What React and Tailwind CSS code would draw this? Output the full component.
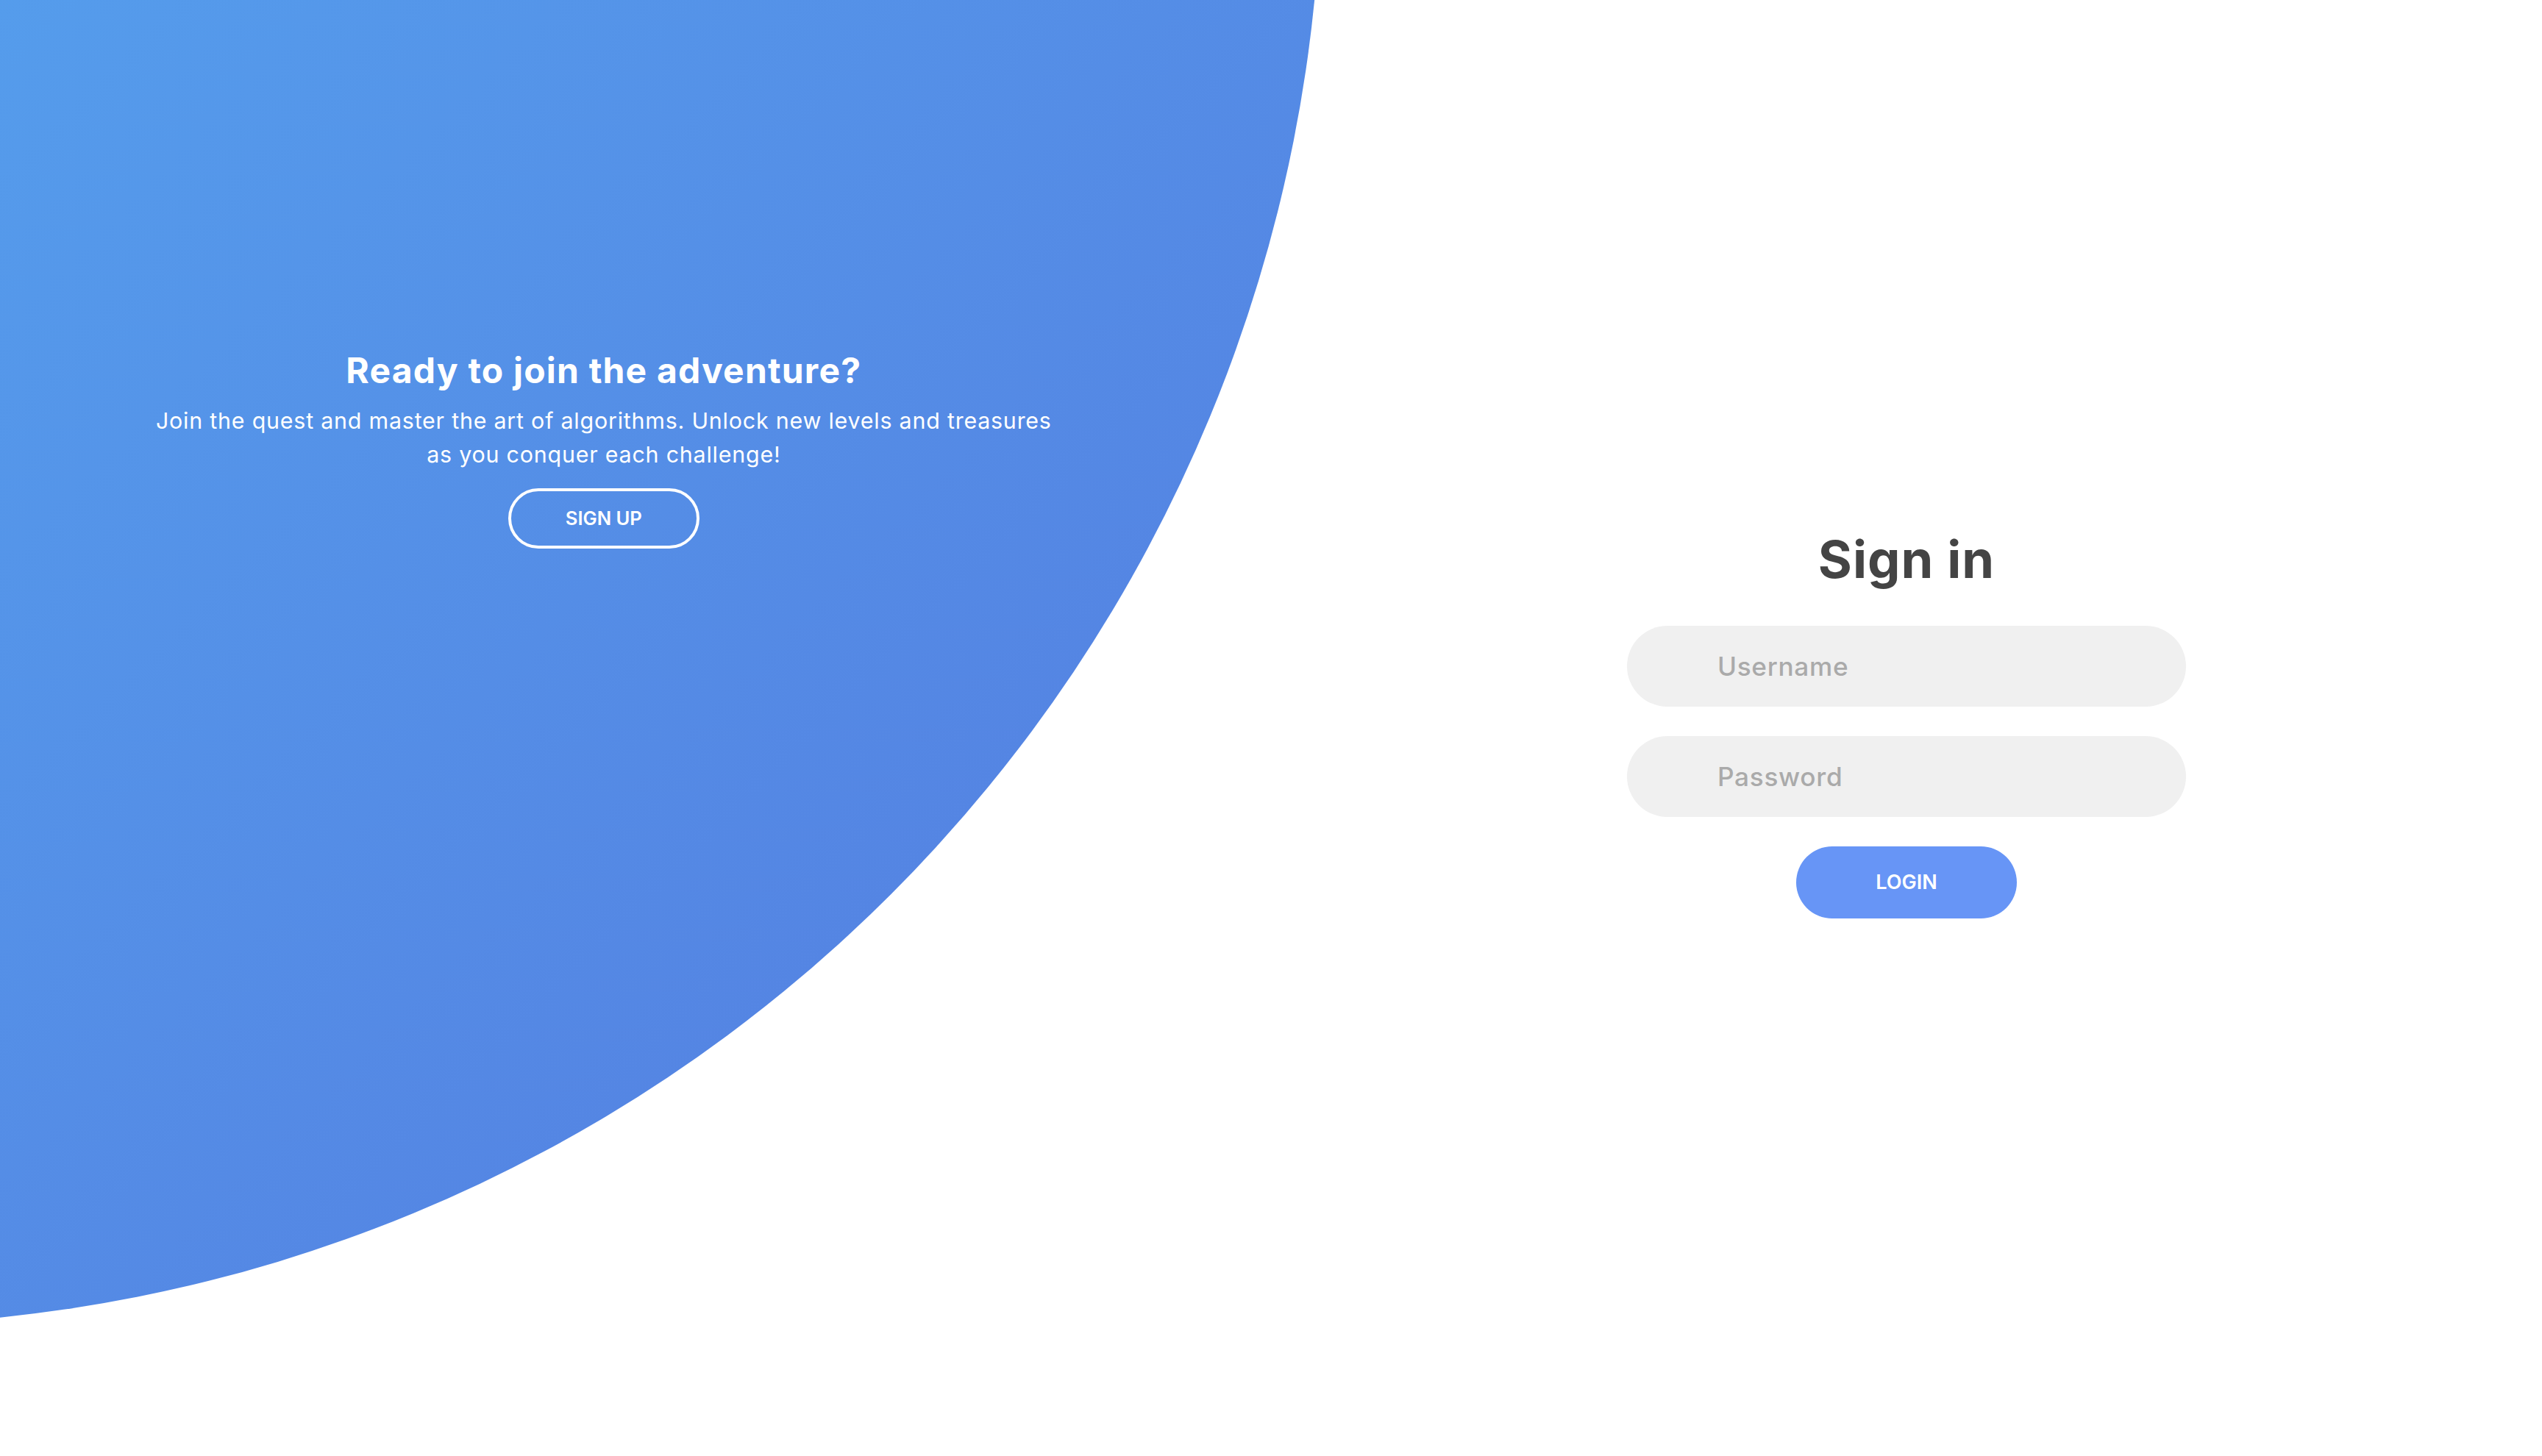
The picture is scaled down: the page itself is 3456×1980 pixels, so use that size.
import React, { useState } from "react";

const font = "font-['Inter','Noto_Sans',sans-serif]";

const Field = ({ type, placeholder, value, onChange }) => {
  return (
    <div className="w-full max-w-[760px] h-[110px] my-[20px] rounded-full bg-[#f0f0f0] grid grid-cols-[15%_85%] px-[12.8px]">
      <span />
      <input
        type={type}
        placeholder={placeholder}
        value={value}
        onChange={(e) => onChange(e.target.value)}
        className="bg-transparent outline-none border-none text-[35.2px] leading-none tracking-[0.02em] font-semibold text-[#333] placeholder:text-[#aaa] placeholder:font-medium"
      />
    </div>
  );
};

const App = () => {
  const [username, setUsername] = useState("");
  const [password, setPassword] = useState("");

  const handleSubmit = (e) => {
    e.preventDefault();
  };

  return (
    <div className={`relative w-full h-[1980px] overflow-hidden bg-white ${font}`}>
      {/* big circle behind the left panel */}
      <div className="absolute left-[-2203px] top-[-2198px] w-[4000px] h-[4000px] rounded-full bg-[linear-gradient(-45deg,#547adf_0%,#56c6fb_100%)]" />

      <div className="relative grid grid-cols-2 h-full">
        <div className="pl-[12%] pr-[17%] pt-[480px] text-center text-white">
          <h3 className="text-[48px] leading-none font-bold tracking-[0.025em]">
            Ready to join the adventure?
          </h3>
          <p className="text-[30.4px] leading-[45.6px] py-[22.4px] tracking-[0.026em]">
            Join the quest and master the art of algorithms. Unlock new levels
            and treasures
            <br />
            as you conquer each challenge!
          </p>
          <button className="w-[260px] h-[82px] rounded-full border-[4px] border-white bg-transparent text-white uppercase font-semibold text-[25.6px]">
            Sign up
          </button>
        </div>

        <div className="flex flex-col items-center justify-center">
          <form
            onSubmit={handleSubmit}
            className="w-full flex flex-col items-center justify-center px-[160px]"
          >
            <h2 className="text-[70.4px] leading-[100px] mb-[20px] font-bold tracking-[0.015em] text-[#444]">
              Sign in
            </h2>
            <Field
              type="text"
              placeholder="Username"
              value={username}
              onChange={setUsername}
            />
            <Field
              type="password"
              placeholder="Password"
              value={password}
              onChange={setPassword}
            />
            <button
              type="submit"
              className="w-[300px] h-[98px] my-[20px] rounded-full bg-[#6795f6] text-white uppercase font-semibold text-[27px]"
            >
              Login
            </button>
          </form>
        </div>
      </div>
    </div>
  );
};

export default App;
